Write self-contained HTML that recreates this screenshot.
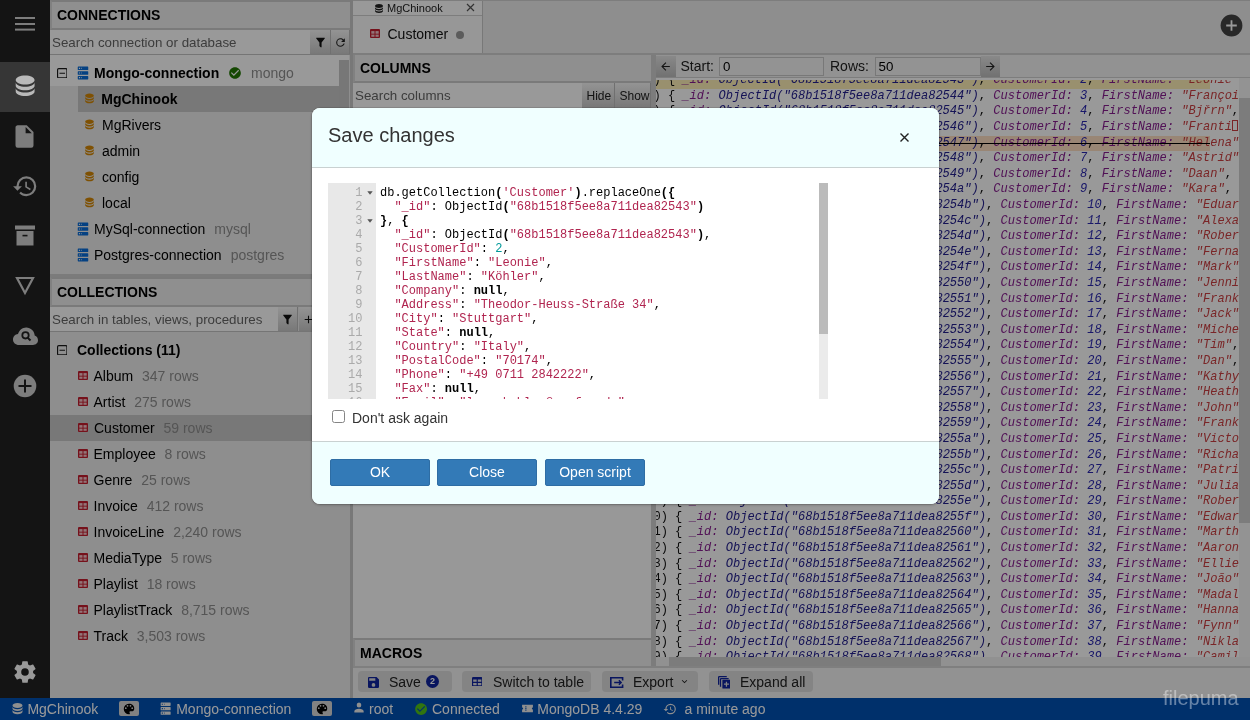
<!DOCTYPE html>
<html><head><meta charset="utf-8">
<style>
*{box-sizing:border-box;margin:0;padding:0}
html,body{width:1250px;height:720px;overflow:hidden;background:#ededed;font-family:"Liberation Sans",sans-serif;font-size:14px;color:#000}
.abs{position:absolute}
#root{position:absolute;left:0;top:0;width:1250px;height:720px;overflow:hidden;will-change:transform}
svg{display:block}
/* icon bar */
#iconbar{position:absolute;left:0;top:0;width:50px;height:698px;background:#222}
#iconbar .it{position:absolute;left:0;width:50px;height:50px}
#iconbar .sel{background:#5a5a5a}
#iconbar svg{position:absolute}
/* sidebar */
#sidebar{position:absolute;left:50px;top:0;width:300px;height:698px;background:#ededed}
.wtitle{position:absolute;left:0;width:300px;height:30px;background:#eeeeee;border-top:2px solid #cccccc;border-left:2px solid #d8d8d8;border-bottom:2px solid #cccccc;font-weight:bold;font-size:14px;padding:5px 0 0 5px;letter-spacing:0}
.srow{position:absolute;left:0;width:300px;height:25px;border-bottom:1px solid #c4c4c4}
.sinput{position:absolute;left:0;top:0;height:24px;background:#fff;color:#666;font-size:13.333px;padding:5px 0 0 2px}
.sbtn{position:absolute;top:0;height:24px;background:linear-gradient(#f6f6f6,#c8c8c8);border-right:1px solid #bbb}
.sbtn svg{position:absolute;left:4px;top:5px}
.row{position:absolute;height:26px;white-space:nowrap}
.row .ic{position:absolute}
.row .tx{position:absolute;top:5px;line-height:16px}
.gray{color:#8e8e8e}
/* main */
#tabbar{position:absolute;left:353px;top:0;width:897px;height:55px;background:#ededed;border-top:1px solid #d0d0d0;border-bottom:2px solid #d0d0d0}
.tabgrp{position:absolute;left:0;top:0;width:130px;height:52px;border-right:1px solid #c8c8c8}
.tabhdr{position:absolute;left:0;top:0;width:129px;height:15px;background:#fff;border-bottom:1px solid #d0d0d0;font-size:11px}
.tab{position:absolute;left:0;top:15px;width:129px;height:37px;background:#fcfcfc}
#splitL{position:absolute;left:350px;top:0;width:3px;height:698px;background:#c9c9c9}
#colpanel{position:absolute;left:353px;top:55px;width:298px;height:613px;background:#fdfdfd}
#splitM{position:absolute;left:651px;top:55px;width:5px;height:613px;background:#cfcfcf}
#data{position:absolute;left:656px;top:55px;width:594px;height:613px;background:#fff}
#dtool{position:absolute;left:0;top:0;width:594px;height:23px;background:#f4f4f4;border-bottom:1px solid #d0d0d0}
.dbtn{position:absolute;top:1px;height:21px;width:20px;background:linear-gradient(#e4e4e4,#bdbdbd)}
.dinp{position:absolute;top:2px;height:19px;background:#f6f6f6;border:1px solid #c8c8c8;font-size:13.333px;padding:1px 0 0 3px}
#jview{position:absolute;left:0;top:24.5px;width:583px;height:577.5px;overflow:hidden}
#jinner{position:absolute;left:-28.8px;top:-6.25px;width:583px}
.jr{height:15.6px;line-height:15.6px;white-space:nowrap;font-family:"Liberation Mono",monospace;font-size:12.05px;color:#111;position:relative}
.jr b,.jr i,.jr u,.jr s{font-style:italic}
.jt{position:relative;left:19px}
.jr b{font-weight:normal;color:#871d8f}
.jr i{color:#24208f}
.jr u{text-decoration:none;color:#2a27b0}
.jr s{text-decoration:none;color:#cb3f41}
.jr.mod{background:#fff1b8}
.jr.del{background:#ffe0c4}
.jr.del::after{content:"";position:absolute;left:0;right:0;top:7.3px;height:1.3px;background:#000}
.tofu{display:inline-block;width:6px;height:11px;border:1px solid #cb3f41;vertical-align:-1px;margin:0 1px 0 0}
#vscroll{position:absolute;left:583px;top:23px;width:11px;height:579px;background:#f6f6f6}
#vthumb{position:absolute;left:0;top:20px;width:11px;height:425px;background:#cfcfcf}
#hscroll{position:absolute;left:0;top:602px;width:594px;height:11px;background:#f2f2f2}
#hthumb{position:absolute;left:13px;top:0;width:272px;height:11px;background:#cfcfcf}
#btool{position:absolute;left:353px;top:666px;width:897px;height:32px;background:#f3f3f3;border-top:2px solid #d4d4d4}
.tbtn{position:absolute;top:3px;height:21px;background:#dcdcdc;border-radius:4px;white-space:nowrap}
.tbtn svg{position:absolute}
.tbtn .tx{position:absolute;top:3px;line-height:16px;color:#222}
#status{position:absolute;left:0;top:698px;width:1250px;height:22px;background:#0050b3;color:#fff;white-space:nowrap}
#status .tx{position:absolute;top:3px;line-height:16px}
#status svg{position:absolute}
.pal{position:absolute;top:3px;width:20px;height:15px;background:#d9d9d9;border-radius:2px}
#overlay{position:absolute;left:0;top:0;width:1250px;height:720px;background:rgba(0,0,0,0.4)}
/* modal */
#modal{position:absolute;left:312px;top:108px;width:627px;height:396px;background:#fff;border-radius:8px;overflow:hidden;box-shadow:0 0 0 1px rgba(0,0,0,0.10),0 1px 3px rgba(0,0,0,0.25)}
#mhdr{position:absolute;left:0;top:0;width:627px;height:60px;background:rgb(240,255,255);border-bottom:1px solid #c9d1d1}
#mtitle{position:absolute;left:16px;top:16px;font-size:20px;color:#333;line-height:23px}
#mclose{position:absolute;left:586px;top:22px}
#editor{position:absolute;left:16px;top:75px;width:500px;height:216px;overflow:hidden;background:#fff;font-family:"Liberation Mono",monospace;font-size:12px}
#gutter{position:absolute;left:0;top:0;width:48px;height:216px;background:#e8e8e8;color:#aaa}
.gl{position:absolute;right:13.5px;height:14px;line-height:14px;margin-top:2.8px}
.fold{position:absolute;left:38.5px;width:6px;height:4px;margin-top:2.6px}
#code{position:absolute;left:52px;top:2.8px;white-space:pre;color:#000}
.cl{height:14px;line-height:14px}
.cs{color:#b0244f}
.cn{color:#099}
.ck{font-weight:bold}
#escroll{position:absolute;left:491px;top:0;width:9px;height:216px;background:#ebebeb}
#ethumb{position:absolute;left:0;top:0;width:9px;height:151px;background:#bbb}
#chk{position:absolute;left:20px;top:302px;width:13px;height:13px;border:1px solid #858585;border-radius:2.5px;background:#fff}
#chktx{position:absolute;left:40px;top:301.8px;line-height:16px;color:#333}
#mfoot{position:absolute;left:0;top:333px;width:627px;height:63px;background:rgb(240,255,255);border-top:1px solid #c9d1d1}
.mbtn{position:absolute;top:17px;width:100px;height:27px;background:#337ab7;border:1px solid #2e6da4;border-radius:2px;color:#fff;text-align:center;line-height:25px;font-size:14px}
#wm{position:absolute;left:1163px;top:686.5px;font-size:20px;line-height:23px;color:rgba(255,255,255,0.4)}
</style></head><body><div id="root">
<svg width="0" height="0" style="position:absolute">
<defs>
<symbol id="i-server" viewBox="0 0 24 24"><path d="M4,1H20A1,1 0 0,1 21,2V6A1,1 0 0,1 20,7H4A1,1 0 0,1 3,6V2A1,1 0 0,1 4,1M4,9H20A1,1 0 0,1 21,10V14A1,1 0 0,1 20,15H4A1,1 0 0,1 3,14V10A1,1 0 0,1 4,9M4,17H20A1,1 0 0,1 21,18V22A1,1 0 0,1 20,23H4A1,1 0 0,1 3,22V18A1,1 0 0,1 4,17M9,5H10V3H9V5M9,13H10V11H9V13M9,21H10V19H9V21M5,3V5H7V3H5M5,11V13H7V11H5M5,19V21H7V19H5Z"/></symbol>
<symbol id="i-db" viewBox="0 0 24 24"><path d="M12,3C7.58,3 4,4.79 4,7C4,9.21 7.58,11 12,11C16.42,11 20,9.21 20,7C20,4.79 16.42,3 12,3M4,9V12C4,14.21 7.58,16 12,16C16.42,16 20,14.21 20,12V9C20,11.21 16.42,13 12,13C7.58,13 4,11.21 4,9M4,14V17C4,19.21 7.58,21 12,21C16.42,21 20,19.21 20,17V14C20,16.21 16.42,18 12,18C7.58,18 4,16.21 4,14Z"/></symbol>
<symbol id="i-table" viewBox="0 0 24 24"><path d="M5,4H19A2,2 0 0,1 21,6V18A2,2 0 0,1 19,20H5A2,2 0 0,1 3,18V6A2,2 0 0,1 5,4M5,8V12H11V8H5M13,8V12H19V8H13M5,14V18H11V14H5M13,14V18H19V14H13Z"/></symbol>
<symbol id="i-minusbox" viewBox="0 0 24 24"><path d="M19,3H5A2,2 0 0,0 3,5V19A2,2 0 0,0 5,21H19A2,2 0 0,0 21,19V5A2,2 0 0,0 19,3M19,19H5V5H19V19M17,11V13H7V11H17Z"/></symbol>
<symbol id="i-check" viewBox="0 0 24 24"><path d="M12 2C6.5 2 2 6.5 2 12S6.5 22 12 22 22 17.5 22 12 17.5 2 12 2M10 17L5 12L6.41 10.59L10 14.17L17.59 6.58L19 8L10 17Z"/></symbol>
<symbol id="i-filter" viewBox="0 0 24 24"><path d="M14,12V19.88C14.04,20.18 13.94,20.5 13.71,20.71C13.32,21.1 12.69,21.1 12.3,20.71L10.29,18.7C10.06,18.47 9.96,18.16 10,17.87V12H9.97L4.21,4.62C3.87,4.19 3.95,3.56 4.38,3.22C4.57,3.08 4.78,3 5,3V3H19V3C19.22,3 19.43,3.08 19.62,3.22C20.05,3.56 20.130,4.19 19.79,4.62L14.03,12H14Z"/></symbol>
<symbol id="i-refresh" viewBox="0 0 24 24"><path d="M17.65,6.35C16.2,4.9 14.21,4 12,4A8,8 0 0,0 4,12A8,8 0 0,0 12,20C15.73,20 18.84,17.45 19.73,14H17.65C16.83,16.33 14.61,18 12,18A6,6 0 0,1 6,12A6,6 0 0,1 12,6C13.66,6 15.14,6.69 16.22,7.78L13,11H20V4L17.65,6.35Z"/></symbol>
<symbol id="i-plus" viewBox="0 0 24 24"><path d="M19,13H13V19H11V13H5V11H11V5H13V11H19V13Z"/></symbol>
<symbol id="i-palette" viewBox="0 0 24 24"><path d="M17.5,12A1.5,1.5 0 0,1 16,10.5A1.5,1.5 0 0,1 17.5,9A1.5,1.5 0 0,1 19,10.5A1.5,1.5 0 0,1 17.5,12M14.5,8A1.5,1.5 0 0,1 13,6.5A1.5,1.5 0 0,1 14.5,5A1.5,1.5 0 0,1 16,6.5A1.5,1.5 0 0,1 14.5,8M9.5,8A1.5,1.5 0 0,1 8,6.5A1.5,1.5 0 0,1 9.5,5A1.5,1.5 0 0,1 11,6.5A1.5,1.5 0 0,1 9.5,8M6.5,12A1.5,1.5 0 0,1 5,10.5A1.5,1.5 0 0,1 6.5,9A1.5,1.5 0 0,1 8,10.5A1.5,1.5 0 0,1 6.5,12M12,3A9,9 0 0,0 3,12A9,9 0 0,0 12,21A1.5,1.5 0 0,0 13.5,19.5C13.5,19.11 13.35,18.76 13.11,18.5C12.88,18.23 12.73,17.88 12.73,17.5A1.5,1.5 0 0,1 14.23,16H16A5,5 0 0,0 21,11C21,6.58 16.97,3 12,3Z"/></symbol>
<symbol id="i-account" viewBox="0 0 24 24"><path d="M12,4A4,4 0 0,1 16,8A4,4 0 0,1 12,12A4,4 0 0,1 8,8A4,4 0 0,1 12,4M12,14C16.42,14 20,15.79 20,18V20H4V18C4,15.79 7.58,14 12,14Z"/></symbol>
<symbol id="i-history" viewBox="0 0 24 24"><path d="M13.5,8H12V13L16.28,15.54L17,14.33L13.5,12.25V8M13,3A9,9 0 0,0 4,12H1L4.96,16.03L9,12H6A7,7 0 0,1 13,5A7,7 0 0,1 20,12A7,7 0 0,1 13,19C11.07,19 9.32,18.21 8.06,16.94L6.64,18.36C8.27,20 10.5,21 13,21A9,9 0 0,0 22,12A9,9 0 0,0 13,3"/></symbol>
<symbol id="i-ticket" viewBox="0 0 24 24"><path d="M2,5H22V10A2,2 0 0,0 22,14V19H2V14A2,2 0 0,0 2,10Z M8,8V10H10V8Z M8,11V13H10V11Z M8,14V16H10V14Z" fill-rule="evenodd"/></symbol>
<symbol id="i-save" viewBox="0 0 24 24"><path d="M15,9H5V5H15M12,19A3,3 0 0,1 9,16A3,3 0 0,1 12,13A3,3 0 0,1 15,16A3,3 0 0,1 12,19M17,3H5C3.89,3 3,3.9 3,5V19A2,2 0 0,0 5,21H19A2,2 0 0,0 21,19V7L17,3Z"/></symbol>
<symbol id="i-export" viewBox="0 0 24 24"><path d="M23,12L19,8V11H10V13H19V16M1,18V6C1,4.89 1.9,4 3,4H15A2,2 0 0,1 17,6V9H15V6H3V18H15V15H17V18A2,2 0 0,1 15,20H3A2,2 0 0,1 1,18Z"/></symbol>
<symbol id="i-chev" viewBox="0 0 24 24"><path d="M7.41,8.58L12,13.17L16.59,8.58L18,10L12,16L6,10L7.41,8.58Z"/></symbol>
<symbol id="i-left" viewBox="0 0 24 24"><path d="M20,11V13H8L13.5,18.5L12.08,19.92L4.16,12L12.08,4.08L13.5,5.5L8,11H20Z"/></symbol>
<symbol id="i-right" viewBox="0 0 24 24"><path d="M4,11V13H16L10.5,18.5L11.92,19.92L19.84,12L11.92,4.08L10.5,5.5L16,11H4Z"/></symbol>
<symbol id="i-close" viewBox="0 0 24 24"><path d="M19,6.41L17.59,5L12,10.59L6.41,5L5,6.41L10.59,12L5,17.59L6.41,19L12,13.41L17.59,19L19,17.59L13.41,12L19,6.41Z"/></symbol>
<symbol id="i-expand" viewBox="0 0 24 24"><path d="M4,2H16V4H4V16H2V4A2,2 0 0,1 4,2Z M7,5H19V7H7V19H5V7A2,2 0 0,1 7,5Z" /><path d="M10,8H21A1,1 0 0,1 22,9V21A1,1 0 0,1 21,22H10A1,1 0 0,1 9,21V9A1,1 0 0,1 10,8Z M14.5,11V14H11.5V16H14.5V19H16.5V16H19.5V14H16.5V11Z" fill-rule="evenodd"/></symbol>
<symbol id="i-tbl2" viewBox="0 0 10 9"><rect x="0" y="0" width="10" height="9" rx="1" fill="#c41d2e"/><rect x="1.3" y="2.1" width="3.2" height="2.6" fill="#f4c4c9"/><rect x="5.5" y="2.1" width="3.2" height="2.6" fill="#f4c4c9"/><rect x="1.3" y="5.6" width="3.2" height="2.2" fill="#f4c4c9"/><rect x="5.5" y="5.6" width="3.2" height="2.2" fill="#f4c4c9"/></symbol>
<symbol id="i-minus2" viewBox="0 0 11 11"><rect x="0.6" y="0.6" width="9.8" height="9.8" rx="1.2" fill="none" stroke="#1a1a1a" stroke-width="1.2"/><path d="M2.6,5.5H8.4" stroke="#1a1a1a" stroke-width="1.3"/></symbol>
<symbol id="i-export2" viewBox="0 0 14 11"><path d="M12.6,3.4V0.8H0.8V10.2H12.6V7.6" fill="none" stroke="#10239e" stroke-width="1.6"/><path d="M4.2,5.5H11.2M8.9,3.2L11.2,5.5L8.9,7.8" fill="none" stroke="#10239e" stroke-width="1.4"/></symbol>
</defs></svg>
<div id="iconbar">
  <svg class="abs" style="left:15px;top:17px" width="20" height="14"><rect x="0" y="0" width="20" height="2" fill="#d0d0d0"/><rect x="0" y="6" width="20" height="2" fill="#d0d0d0"/><rect x="0" y="11.6" width="20" height="2" fill="#d0d0d0"/></svg>
  <div class="it sel" style="top:62px"></div>
  
  <svg style="left:11px;top:123px" width="27" height="27" viewBox="0 0 24 24"><path fill="#d0d0d0" d="M13,9V3.5L18.5,9M6,2C4.89,2 4,2.89 4,4V20A2,2 0 0,0 6,22H18A2,2 0 0,0 20,20V8L14,2H6Z"/></svg>
  <svg style="left:12px;top:172.5px" width="26.5" height="26.5" viewBox="0 0 24 24"><path fill="#d0d0d0" d="M13.5,8H12V13L16.28,15.54L17,14.33L13.5,12.25V8M13,3A9,9 0 0,0 4,12H1L4.96,16.03L9,12H6A7,7 0 0,1 13,5A7,7 0 0,1 20,12A7,7 0 0,1 13,19C11.07,19 9.32,18.21 8.06,16.94L6.64,18.36C8.27,20 10.5,21 13,21A9,9 0 0,0 22,12A9,9 0 0,0 13,3"/></svg>
  <svg style="left:13px;top:224px" width="24" height="24" viewBox="0 0 24 24"><path fill="#d0d0d0" d="M2,1.5H22V5.5H2Z M3.5,7H20.5V21.5H3.5Z"/><rect x="9.5" y="10.8" width="5" height="1.6" fill="#222"/></svg>
  <svg style="left:13px;top:275px" width="24" height="22" viewBox="0 0 24 22"><path fill="none" stroke="#d0d0d0" stroke-width="2.2" d="M4,3H20L12,18Z"/></svg>
  <svg style="left:12px;top:324px" width="27" height="24" viewBox="0 0 27 24"><path fill="#d0d0d0" d="M7,21C3.5,21 1,18.6 1,15.5C1,12.7 3.2,10.4 6,10.1C7.2,6.3 10.4,3.5 14.2,3.5C18.9,3.5 22.5,7.2 22.7,11.6C24.8,12.3 26,14.1 26,16.3C26,19 23.8,21 21,21Z"/><circle cx="13.5" cy="11.3" r="3.2" fill="none" stroke="#222" stroke-width="1.8"/><path d="M15.6,13.6L18.5,16.5" stroke="#222" stroke-width="2"/></svg>
  <svg style="left:12px;top:373px" width="26" height="26" viewBox="0 0 26 26"><circle cx="13" cy="13" r="11.3" fill="#d0d0d0"/><path d="M6.5,12H19.5V14H6.5Z M12,6.5H14V19.5H12Z" fill="#222"/></svg>
  <svg style="left:12px;top:659px" width="26" height="26" viewBox="0 0 24 24"><path fill="#fff" d="M12,15.5A3.5,3.5 0 0,1 8.5,12A3.5,3.5 0 0,1 12,8.5A3.5,3.5 0 0,1 15.5,12A3.5,3.5 0 0,1 12,15.5M19.43,12.97C19.47,12.65 19.5,12.33 19.5,12C19.5,11.67 19.47,11.34 19.43,11L21.54,9.37C21.73,9.22 21.78,8.95 21.66,8.73L19.66,5.27C19.54,5.05 19.27,4.96 19.05,5.05L16.56,6.05C16.04,5.66 15.5,5.32 14.87,5.07L14.5,2.42C14.46,2.18 14.25,2 14,2H10C9.75,2 9.54,2.18 9.5,2.42L9.13,5.07C8.5,5.32 7.96,5.66 7.44,6.05L4.95,5.05C4.73,4.96 4.46,5.05 4.34,5.27L2.34,8.73C2.21,8.95 2.27,9.22 2.46,9.37L4.57,11C4.53,11.34 4.5,11.67 4.5,12C4.5,12.33 4.53,12.65 4.57,12.97L2.46,14.63C2.27,14.78 2.21,15.05 2.34,15.27L4.34,18.73C4.46,18.95 4.73,19.03 4.95,18.95L7.44,17.94C7.96,18.34 8.5,18.68 9.13,18.93L9.5,21.58C9.54,21.820 9.75,22 10,22H14C14.25,22 14.46,21.82 14.5,21.58L14.87,18.93C15.5,18.67 16.04,18.34 16.56,17.94L19.05,18.95C19.27,19.03 19.54,18.95 19.66,18.73L21.66,15.27C21.78,15.05 21.73,14.78 21.54,14.63L19.43,12.97Z"/></svg>
</div>
<div id="sidebar">
  <div class="wtitle" style="top:0">CONNECTIONS</div>
  <div class="srow" style="top:30px">
    <div class="sinput" style="width:260px">Search connection or database</div>
    <div class="sbtn" style="left:260px;width:21px"><svg width="13" height="13" style="left:4px;top:6px"><use href="#i-filter" fill="#111"/></svg></div>
    <div class="sbtn" style="left:281px;width:19px"><svg width="13" height="13" style="left:3px;top:6px"><use href="#i-refresh" fill="#222"/></svg></div>
  </div>
  <div class="abs" style="left:0;top:55px;width:299px;height:5px;background:#fff"></div>
  <div class="abs" style="left:289px;top:60px;width:10px;height:214px;background:#c6c6c6"></div>
  <div class="row" style="left:0;top:60px;width:289px;background:#fff">
    <svg class="ic" style="left:6.5px;top:7.8px" width="10.5" height="10.5"><use href="#i-minus2"/></svg>
    <svg class="ic" style="left:26px;top:6px" width="14" height="14"><use href="#i-server" fill="#096dd9"/></svg>
    <span class="tx" style="left:44px;font-weight:bold">Mongo-connection</span>
    <svg class="ic" style="left:178px;top:6px" width="14" height="14"><use href="#i-check" fill="#237804"/></svg>
    <span class="tx gray" style="left:201px">mongo</span>
  </div>
  <div class="row" style="left:28px;top:86px;width:261px;background:#c8c8c8">
    <svg class="ic" style="left:5px;top:6px" width="13" height="14" viewBox="0 0 24 26" preserveAspectRatio="none"><use href="#i-db" width="24" height="24" fill="#d48806"/></svg>
    <span class="tx" style="left:23.3px;font-weight:bold">MgChinook</span>
  </div>
  <div class="row" style="left:28px;top:112px;width:261px"><svg class="ic" style="left:5px;top:6px" width="13" height="14" viewBox="0 0 24 26" preserveAspectRatio="none"><use href="#i-db" width="24" height="24" fill="#d48806"/></svg><span class="tx" style="left:24px">MgRivers</span></div>
  <div class="row" style="left:28px;top:138px;width:261px"><svg class="ic" style="left:5px;top:6px" width="13" height="14" viewBox="0 0 24 26" preserveAspectRatio="none"><use href="#i-db" width="24" height="24" fill="#d48806"/></svg><span class="tx" style="left:24px">admin</span></div>
  <div class="row" style="left:28px;top:164px;width:261px"><svg class="ic" style="left:5px;top:6px" width="13" height="14" viewBox="0 0 24 26" preserveAspectRatio="none"><use href="#i-db" width="24" height="24" fill="#d48806"/></svg><span class="tx" style="left:24px">config</span></div>
  <div class="row" style="left:28px;top:190px;width:261px"><svg class="ic" style="left:5px;top:6px" width="13" height="14" viewBox="0 0 24 26" preserveAspectRatio="none"><use href="#i-db" width="24" height="24" fill="#d48806"/></svg><span class="tx" style="left:24px">local</span></div>
  <div class="row" style="left:0;top:216px;width:289px">
    <svg class="ic" style="left:26px;top:6px" width="14" height="14"><use href="#i-server" fill="#096dd9"/></svg>
    <span class="tx" style="left:44px">MySql-connection<span class="gray" style="margin-left:9px">mysql</span></span>
  </div>
  <div class="row" style="left:0;top:242px;width:289px">
    <svg class="ic" style="left:26px;top:6px" width="14" height="14"><use href="#i-server" fill="#096dd9"/></svg>
    <span class="tx" style="left:44px">Postgres-connection<span class="gray" style="margin-left:9px">postgres</span></span>
  </div>
  <div class="abs" style="left:0;top:274px;width:300px;height:5px;background:#cdcdcd"></div>
  <div class="wtitle" style="top:277px">COLLECTIONS</div>
  <div class="srow" style="top:307px">
    <div class="sinput" style="width:228px">Search in tables, views, procedures</div>
    <div class="sbtn" style="left:228px;width:20px"><svg width="13" height="13" style="left:3px;top:6px"><use href="#i-filter" fill="#111"/></svg></div>
    <div class="sbtn" style="left:249px;width:20px"><svg width="13" height="13" style="left:3px;top:6px"><use href="#i-plus" fill="#111"/></svg></div>
  </div>
  <div class="row" style="left:0;top:337px;width:300px">
    <svg class="ic" style="left:6.5px;top:7.8px" width="10.5" height="10.5"><use href="#i-minus2"/></svg>
    <span class="tx" style="left:27px;font-weight:bold">Collections (11)</span>
  </div>
  <div class="row" style="left:0;top:363px;width:300px"><svg class="ic" style="left:28px;top:8px" width="10" height="9"><use href="#i-tbl2"/></svg><span class="tx" style="left:43.5px">Album<span class="gray" style="margin-left:8.8px">347 rows</span></span></div>
  <div class="row" style="left:0;top:389px;width:300px"><svg class="ic" style="left:28px;top:8px" width="10" height="9"><use href="#i-tbl2"/></svg><span class="tx" style="left:43.5px">Artist<span class="gray" style="margin-left:8.8px">275 rows</span></span></div>
  <div class="row" style="left:0;top:415px;width:300px;background:#c8c8c8"><svg class="ic" style="left:28px;top:8px" width="10" height="9"><use href="#i-tbl2"/></svg><span class="tx" style="left:44px">Customer<span class="gray" style="margin-left:8.8px">59 rows</span></span></div>
  <div class="row" style="left:0;top:441px;width:300px"><svg class="ic" style="left:28px;top:8px" width="10" height="9"><use href="#i-tbl2"/></svg><span class="tx" style="left:43.5px">Employee<span class="gray" style="margin-left:8.8px">8 rows</span></span></div>
  <div class="row" style="left:0;top:467px;width:300px"><svg class="ic" style="left:28px;top:8px" width="10" height="9"><use href="#i-tbl2"/></svg><span class="tx" style="left:43.5px">Genre<span class="gray" style="margin-left:8.8px">25 rows</span></span></div>
  <div class="row" style="left:0;top:493px;width:300px"><svg class="ic" style="left:28px;top:8px" width="10" height="9"><use href="#i-tbl2"/></svg><span class="tx" style="left:43.5px">Invoice<span class="gray" style="margin-left:8.8px">412 rows</span></span></div>
  <div class="row" style="left:0;top:519px;width:300px"><svg class="ic" style="left:28px;top:8px" width="10" height="9"><use href="#i-tbl2"/></svg><span class="tx" style="left:43.5px">InvoiceLine<span class="gray" style="margin-left:8.8px">2,240 rows</span></span></div>
  <div class="row" style="left:0;top:545px;width:300px"><svg class="ic" style="left:28px;top:8px" width="10" height="9"><use href="#i-tbl2"/></svg><span class="tx" style="left:43.5px">MediaType<span class="gray" style="margin-left:8.8px">5 rows</span></span></div>
  <div class="row" style="left:0;top:571px;width:300px"><svg class="ic" style="left:28px;top:8px" width="10" height="9"><use href="#i-tbl2"/></svg><span class="tx" style="left:43.5px">Playlist<span class="gray" style="margin-left:8.8px">18 rows</span></span></div>
  <div class="row" style="left:0;top:597px;width:300px"><svg class="ic" style="left:28px;top:8px" width="10" height="9"><use href="#i-tbl2"/></svg><span class="tx" style="left:43.5px">PlaylistTrack<span class="gray" style="margin-left:8.8px">8,715 rows</span></span></div>
  <div class="row" style="left:0;top:623px;width:300px"><svg class="ic" style="left:28px;top:8px" width="10" height="9"><use href="#i-tbl2"/></svg><span class="tx" style="left:43.5px">Track<span class="gray" style="margin-left:8.8px">3,503 rows</span></span></div>
</div>
<div id="splitL"></div>
<div id="tabbar">
  <div class="tabgrp">
    <div class="tabhdr">
      <svg class="abs" style="left:21.5px;top:2.5px" width="8" height="9" viewBox="4 3 16 18" preserveAspectRatio="none"><use href="#i-db" width="24" height="24" fill="#222"/></svg>
      <span class="abs" style="left:34px;top:1px;line-height:13px;color:#222">MgChinook</span>
      <svg class="abs" style="left:113px;top:2px" width="9" height="9" viewBox="0 0 9 9"><path d="M1,1L8,8M8,1L1,8" stroke="#555" stroke-width="1.2"/></svg>
    </div>
    <div class="tab">
      <svg class="abs" style="left:17px;top:13px" width="10" height="9"><use href="#i-tbl2"/></svg>
      <span class="abs" style="left:34.5px;top:10px;line-height:16px;color:#111">Customer</span>
      <div class="abs" style="left:103px;top:14.6px;width:8px;height:8px;border-radius:50%;background:#999"></div>
    </div>
  </div>
  <svg class="abs" style="left:867.2px;top:13px" width="23" height="23" viewBox="0 0 23 23"><circle cx="11.5" cy="11.5" r="10.9" fill="#444"/><path d="M6.2,10.6H16.8V12.4H6.2Z M10.6,6.2H12.4V16.8H10.6Z" fill="#fff"/></svg>
</div>
<div id="colpanel">
  <div class="abs" style="left:0;top:0;width:298px;height:28px;background:#eeeeee;border-left:2px solid #d8d8d8;border-bottom:2px solid #cccccc;font-weight:bold;padding:5px 0 0 5px">COLUMNS</div>
  <div class="abs" style="left:0;top:28px;width:298px;height:25px">
    <div class="sinput" style="width:229px;height:25px;padding-top:5px;background:#fff">Search columns</div>
    <div class="sbtn" style="left:229px;width:33px;height:25px"><span class="abs" style="left:4.5px;top:5px;line-height:16px;font-size:12px;color:#222">Hide</span></div>
    <div class="sbtn" style="left:262px;width:36px;height:25px"><span class="abs" style="left:4.5px;top:5px;line-height:16px;font-size:12px;color:#222">Show</span></div>
  </div>
  <div class="abs" style="left:0;top:583px;width:298px;height:30px;background:#eeeeee;border-top:2px solid #cccccc;border-left:2px solid #d8d8d8;border-bottom:2px solid #cccccc;font-weight:bold;padding:5px 0 0 5px">MACROS</div>
</div>
<div id="splitM"></div>
<div id="data">
  <div id="dtool">
    <div class="dbtn" style="left:0"><svg class="abs" style="left:3px;top:4px" width="13" height="13"><use href="#i-left" fill="#222"/></svg></div>
    <span class="abs" style="left:24.5px;top:3px;line-height:16px;color:#222">Start:</span>
    <div class="dinp" style="left:63px;width:105px">0</div>
    <span class="abs" style="left:174px;top:3px;line-height:16px;color:#222">Rows:</span>
    <div class="dinp" style="left:218.5px;width:106px">50</div>
    <div class="dbtn" style="left:325px;width:19px"><svg class="abs" style="left:3px;top:4px" width="13" height="13"><use href="#i-right" fill="#222"/></svg></div>
  </div>
  <div id="jview"><div id="jinner">
<div class="jr mod"><span class="jt">2) { <b>_id:</b> <i>ObjectId("68b1518f5ee8a711dea82543")</i>, <b>CustomerId:</b> <u>2</u>, <b>FirstName:</b> <s>"Leonie"</s>, <b>LastName:</b> </span></div>
<div class="jr"><span class="jt">3) { <b>_id:</b> <i>ObjectId("68b1518f5ee8a711dea82544")</i>, <b>CustomerId:</b> <u>3</u>, <b>FirstName:</b> <s>"François"</s>, <b>LastName:</b> </span></div>
<div class="jr"><span class="jt">4) { <b>_id:</b> <i>ObjectId("68b1518f5ee8a711dea82545")</i>, <b>CustomerId:</b> <u>4</u>, <b>FirstName:</b> <s>"Bjřrn"</s>, <b>LastName:</b> </span></div>
<div class="jr"><span class="jt">5) { <b>_id:</b> <i>ObjectId("68b1518f5ee8a711dea82546")</i>, <b>CustomerId:</b> <u>5</u>, <b>FirstName:</b> <s>"Franti<span class="tofu"></span>ek"</s>, <b>LastName:</b> </span></div>
<div class="jr del"><span class="jt">6) { <b>_id:</b> <i>ObjectId("68b1518f5ee8a711dea82547")</i>, <b>CustomerId:</b> <u>6</u>, <b>FirstName:</b> <s>"Helena"</s>, <b>LastName:</b> </span></div>
<div class="jr"><span class="jt">7) { <b>_id:</b> <i>ObjectId("68b1518f5ee8a711dea82548")</i>, <b>CustomerId:</b> <u>7</u>, <b>FirstName:</b> <s>"Astrid"</s>, <b>LastName:</b> </span></div>
<div class="jr"><span class="jt">8) { <b>_id:</b> <i>ObjectId("68b1518f5ee8a711dea82549")</i>, <b>CustomerId:</b> <u>8</u>, <b>FirstName:</b> <s>"Daan"</s>, <b>LastName:</b> </span></div>
<div class="jr"><span class="jt">9) { <b>_id:</b> <i>ObjectId("68b1518f5ee8a711dea8254a")</i>, <b>CustomerId:</b> <u>9</u>, <b>FirstName:</b> <s>"Kara"</s>, <b>LastName:</b> </span></div>
<div class="jr"><span class="jt">10) { <b>_id:</b> <i>ObjectId("68b1518f5ee8a711dea8254b")</i>, <b>CustomerId:</b> <u>10</u>, <b>FirstName:</b> <s>"Eduardo"</s>, <b>LastName:</b> </span></div>
<div class="jr"><span class="jt">11) { <b>_id:</b> <i>ObjectId("68b1518f5ee8a711dea8254c")</i>, <b>CustomerId:</b> <u>11</u>, <b>FirstName:</b> <s>"Alexandre"</s>, <b>LastName:</b> </span></div>
<div class="jr"><span class="jt">12) { <b>_id:</b> <i>ObjectId("68b1518f5ee8a711dea8254d")</i>, <b>CustomerId:</b> <u>12</u>, <b>FirstName:</b> <s>"Roberto"</s>, <b>LastName:</b> </span></div>
<div class="jr"><span class="jt">13) { <b>_id:</b> <i>ObjectId("68b1518f5ee8a711dea8254e")</i>, <b>CustomerId:</b> <u>13</u>, <b>FirstName:</b> <s>"Fernanda"</s>, <b>LastName:</b> </span></div>
<div class="jr"><span class="jt">14) { <b>_id:</b> <i>ObjectId("68b1518f5ee8a711dea8254f")</i>, <b>CustomerId:</b> <u>14</u>, <b>FirstName:</b> <s>"Mark"</s>, <b>LastName:</b> </span></div>
<div class="jr"><span class="jt">15) { <b>_id:</b> <i>ObjectId("68b1518f5ee8a711dea82550")</i>, <b>CustomerId:</b> <u>15</u>, <b>FirstName:</b> <s>"Jennifer"</s>, <b>LastName:</b> </span></div>
<div class="jr"><span class="jt">16) { <b>_id:</b> <i>ObjectId("68b1518f5ee8a711dea82551")</i>, <b>CustomerId:</b> <u>16</u>, <b>FirstName:</b> <s>"Frank"</s>, <b>LastName:</b> </span></div>
<div class="jr"><span class="jt">17) { <b>_id:</b> <i>ObjectId("68b1518f5ee8a711dea82552")</i>, <b>CustomerId:</b> <u>17</u>, <b>FirstName:</b> <s>"Jack"</s>, <b>LastName:</b> </span></div>
<div class="jr"><span class="jt">18) { <b>_id:</b> <i>ObjectId("68b1518f5ee8a711dea82553")</i>, <b>CustomerId:</b> <u>18</u>, <b>FirstName:</b> <s>"Michelle"</s>, <b>LastName:</b> </span></div>
<div class="jr"><span class="jt">19) { <b>_id:</b> <i>ObjectId("68b1518f5ee8a711dea82554")</i>, <b>CustomerId:</b> <u>19</u>, <b>FirstName:</b> <s>"Tim"</s>, <b>LastName:</b> </span></div>
<div class="jr"><span class="jt">20) { <b>_id:</b> <i>ObjectId("68b1518f5ee8a711dea82555")</i>, <b>CustomerId:</b> <u>20</u>, <b>FirstName:</b> <s>"Dan"</s>, <b>LastName:</b> </span></div>
<div class="jr"><span class="jt">21) { <b>_id:</b> <i>ObjectId("68b1518f5ee8a711dea82556")</i>, <b>CustomerId:</b> <u>21</u>, <b>FirstName:</b> <s>"Kathy"</s>, <b>LastName:</b> </span></div>
<div class="jr"><span class="jt">22) { <b>_id:</b> <i>ObjectId("68b1518f5ee8a711dea82557")</i>, <b>CustomerId:</b> <u>22</u>, <b>FirstName:</b> <s>"Heather"</s>, <b>LastName:</b> </span></div>
<div class="jr"><span class="jt">23) { <b>_id:</b> <i>ObjectId("68b1518f5ee8a711dea82558")</i>, <b>CustomerId:</b> <u>23</u>, <b>FirstName:</b> <s>"John"</s>, <b>LastName:</b> </span></div>
<div class="jr"><span class="jt">24) { <b>_id:</b> <i>ObjectId("68b1518f5ee8a711dea82559")</i>, <b>CustomerId:</b> <u>24</u>, <b>FirstName:</b> <s>"Frank"</s>, <b>LastName:</b> </span></div>
<div class="jr"><span class="jt">25) { <b>_id:</b> <i>ObjectId("68b1518f5ee8a711dea8255a")</i>, <b>CustomerId:</b> <u>25</u>, <b>FirstName:</b> <s>"Victor"</s>, <b>LastName:</b> </span></div>
<div class="jr"><span class="jt">26) { <b>_id:</b> <i>ObjectId("68b1518f5ee8a711dea8255b")</i>, <b>CustomerId:</b> <u>26</u>, <b>FirstName:</b> <s>"Richard"</s>, <b>LastName:</b> </span></div>
<div class="jr"><span class="jt">27) { <b>_id:</b> <i>ObjectId("68b1518f5ee8a711dea8255c")</i>, <b>CustomerId:</b> <u>27</u>, <b>FirstName:</b> <s>"Patrick"</s>, <b>LastName:</b> </span></div>
<div class="jr"><span class="jt">28) { <b>_id:</b> <i>ObjectId("68b1518f5ee8a711dea8255d")</i>, <b>CustomerId:</b> <u>28</u>, <b>FirstName:</b> <s>"Julia"</s>, <b>LastName:</b> </span></div>
<div class="jr"><span class="jt">29) { <b>_id:</b> <i>ObjectId("68b1518f5ee8a711dea8255e")</i>, <b>CustomerId:</b> <u>29</u>, <b>FirstName:</b> <s>"Robert"</s>, <b>LastName:</b> </span></div>
<div class="jr"><span class="jt">30) { <b>_id:</b> <i>ObjectId("68b1518f5ee8a711dea8255f")</i>, <b>CustomerId:</b> <u>30</u>, <b>FirstName:</b> <s>"Edward"</s>, <b>LastName:</b> </span></div>
<div class="jr"><span class="jt">31) { <b>_id:</b> <i>ObjectId("68b1518f5ee8a711dea82560")</i>, <b>CustomerId:</b> <u>31</u>, <b>FirstName:</b> <s>"Martha"</s>, <b>LastName:</b> </span></div>
<div class="jr"><span class="jt">32) { <b>_id:</b> <i>ObjectId("68b1518f5ee8a711dea82561")</i>, <b>CustomerId:</b> <u>32</u>, <b>FirstName:</b> <s>"Aaron"</s>, <b>LastName:</b> </span></div>
<div class="jr"><span class="jt">33) { <b>_id:</b> <i>ObjectId("68b1518f5ee8a711dea82562")</i>, <b>CustomerId:</b> <u>33</u>, <b>FirstName:</b> <s>"Ellie"</s>, <b>LastName:</b> </span></div>
<div class="jr"><span class="jt">34) { <b>_id:</b> <i>ObjectId("68b1518f5ee8a711dea82563")</i>, <b>CustomerId:</b> <u>34</u>, <b>FirstName:</b> <s>"João"</s>, <b>LastName:</b> </span></div>
<div class="jr"><span class="jt">35) { <b>_id:</b> <i>ObjectId("68b1518f5ee8a711dea82564")</i>, <b>CustomerId:</b> <u>35</u>, <b>FirstName:</b> <s>"Madalena"</s>, <b>LastName:</b> </span></div>
<div class="jr"><span class="jt">36) { <b>_id:</b> <i>ObjectId("68b1518f5ee8a711dea82565")</i>, <b>CustomerId:</b> <u>36</u>, <b>FirstName:</b> <s>"Hannah"</s>, <b>LastName:</b> </span></div>
<div class="jr"><span class="jt">37) { <b>_id:</b> <i>ObjectId("68b1518f5ee8a711dea82566")</i>, <b>CustomerId:</b> <u>37</u>, <b>FirstName:</b> <s>"Fynn"</s>, <b>LastName:</b> </span></div>
<div class="jr"><span class="jt">38) { <b>_id:</b> <i>ObjectId("68b1518f5ee8a711dea82567")</i>, <b>CustomerId:</b> <u>38</u>, <b>FirstName:</b> <s>"Niklas"</s>, <b>LastName:</b> </span></div>
<div class="jr"><span class="jt">39) { <b>_id:</b> <i>ObjectId("68b1518f5ee8a711dea82568")</i>, <b>CustomerId:</b> <u>39</u>, <b>FirstName:</b> <s>"Camille"</s>, <b>LastName:</b> </span></div>  </div></div>
  <div id="vscroll"><div id="vthumb"></div></div>
  <div id="hscroll"><div id="hthumb"></div></div>
</div>
<div id="btool">
  <div class="tbtn" style="left:5px;width:94px"><svg style="left:9.5px;top:5.5px" width="11" height="11" viewBox="3 3 18 18"><use href="#i-save" width="24" height="24" fill="#10239e"/></svg><span class="tx" style="left:31px">Save</span><div class="abs" style="left:68px;top:4px;width:13px;height:13px;border-radius:50%;background:#10239e;color:#fff;font-size:9px;line-height:13px;text-align:center;font-weight:bold">2</div></div>
  <div class="tbtn" style="left:109px;width:129px"><svg style="left:9.5px;top:5.5px" width="10.5" height="9.5" viewBox="3 4 18 16" preserveAspectRatio="none"><use href="#i-table" width="24" height="24" fill="#10239e"/></svg><span class="tx" style="left:31px">Switch to table</span></div>
  <div class="tbtn" style="left:249px;width:96px"><svg style="left:8px;top:5.5px" width="14" height="11"><use href="#i-export2"/></svg><span class="tx" style="left:31px">Export</span><svg style="left:77px;top:5px" width="11" height="11"><use href="#i-chev" fill="#222"/></svg></div>
  <div class="tbtn" style="left:356px;width:104px"><svg style="left:8.5px;top:5px" width="12.5" height="12.5" viewBox="2 2 20 20"><use href="#i-expand" width="24" height="24" fill="#10239e"/></svg><span class="tx" style="left:31px">Expand all</span></div>
</div>
<div id="status">
  <svg style="left:9.5px;top:3px" width="15" height="15"><use href="#i-db" fill="#eee"/></svg>
  <span class="tx" style="left:27.4px">MgChinook</span>
  <div class="pal" style="left:119px"><svg style="left:3px;top:0.5px" width="14" height="14"><use href="#i-palette" fill="#000"/></svg></div>
  <svg style="left:159.3px;top:4px" width="13.3" height="13.3"><use href="#i-server" fill="#eee"/></svg>
  <span class="tx" style="left:176.2px">Mongo-connection</span>
  <div class="pal" style="left:312px"><svg style="left:3px;top:0.5px" width="14" height="14"><use href="#i-palette" fill="#000"/></svg></div>
  <svg style="left:351.8px;top:2.3px" width="14" height="15" viewBox="0 0 24 24" preserveAspectRatio="none"><use href="#i-account" width="24" height="24" fill="#eee"/></svg>
  <span class="tx" style="left:369px">root</span>
  <svg style="left:413.8px;top:4px" width="14.2" height="14.2"><use href="#i-check" fill="#52c41a"/></svg>
  <span class="tx" style="left:432px">Connected</span>
  <svg style="left:520.5px;top:4px" width="13" height="13"><use href="#i-ticket" fill="#eee"/></svg>
  <span class="tx" style="left:537.3px">MongoDB 4.4.29</span>
  <svg style="left:663.4px;top:3.5px" width="14" height="14"><use href="#i-history" fill="#eee"/></svg>
  <span class="tx" style="left:684.5px">a minute ago</span>
</div>
<div id="overlay"></div>
<div id="modal">
  <div id="mhdr">
    <div id="mtitle">Save changes</div>
    <svg id="mclose" style="left:588px;top:24.5px" width="9" height="9" viewBox="0 0 9 9"><path d="M0.5,0.5L8.5,8.5M8.5,0.5L0.5,8.5" stroke="#222" stroke-width="1.4"/></svg>
  </div>
  <div id="editor">
    <div id="gutter">
      <div class="gl" style="top:0">1</div><svg class="fold" style="top:5px" viewBox="0 0 6 4"><path d="M0.3,0.2H5.7L3,3.8Z" fill="#555"/></svg>
      <div class="gl" style="top:14px">2</div>
      <div class="gl" style="top:28px">3</div><svg class="fold" style="top:33px" viewBox="0 0 6 4"><path d="M0.3,0.2H5.7L3,3.8Z" fill="#555"/></svg>
      <div class="gl" style="top:42px">4</div>
      <div class="gl" style="top:56px">5</div>
      <div class="gl" style="top:70px">6</div>
      <div class="gl" style="top:84px">7</div>
      <div class="gl" style="top:98px">8</div>
      <div class="gl" style="top:112px">9</div>
      <div class="gl" style="top:126px">10</div>
      <div class="gl" style="top:140px">11</div>
      <div class="gl" style="top:154px">12</div>
      <div class="gl" style="top:168px">13</div>
      <div class="gl" style="top:182px">14</div>
      <div class="gl" style="top:196px">15</div>
      <div class="gl" style="top:210px">16</div>
    </div>
    <div id="code"><div class="cl">db.getCollection<b>(</b><span class="cs">'Customer'</span><b>)</b>.replaceOne<b>({</b></div><div class="cl">  <span class="cs">"_id"</span>: ObjectId<b>(</b><span class="cs">"68b1518f5ee8a711dea82543"</span><b>)</b></div><div class="cl"><b>}</b>, <b>{</b></div><div class="cl">  <span class="cs">"_id"</span>: ObjectId<b>(</b><span class="cs">"68b1518f5ee8a711dea82543"</span><b>)</b>,</div><div class="cl">  <span class="cs">"CustomerId"</span>: <span class="cn">2</span>,</div><div class="cl">  <span class="cs">"FirstName"</span>: <span class="cs">"Leonie"</span>,</div><div class="cl">  <span class="cs">"LastName"</span>: <span class="cs">"Köhler"</span>,</div><div class="cl">  <span class="cs">"Company"</span>: <b>null</b>,</div><div class="cl">  <span class="cs">"Address"</span>: <span class="cs">"Theodor-Heuss-Straße 34"</span>,</div><div class="cl">  <span class="cs">"City"</span>: <span class="cs">"Stuttgart"</span>,</div><div class="cl">  <span class="cs">"State"</span>: <b>null</b>,</div><div class="cl">  <span class="cs">"Country"</span>: <span class="cs">"Italy"</span>,</div><div class="cl">  <span class="cs">"PostalCode"</span>: <span class="cs">"70174"</span>,</div><div class="cl">  <span class="cs">"Phone"</span>: <span class="cs">"+49 0711 2842222"</span>,</div><div class="cl">  <span class="cs">"Fax"</span>: <b>null</b>,</div><div class="cl">  <span class="cs">"Email"</span>: <span class="cs">"leonekohler@surfeu.de"</span>,</div></div>
    <div id="escroll"><div id="ethumb"></div></div>
  </div>
  <div id="chk"></div>
  <div id="chktx">Don't ask again</div>
  <div id="mfoot">
    <div class="mbtn" style="left:18px">OK</div>
    <div class="mbtn" style="left:125px">Close</div>
    <div class="mbtn" style="left:233px">Open script</div>
  </div>
</div>
<svg style="position:absolute;left:10.8px;top:72.1px" width="28.3" height="27.4" viewBox="0 0 24 24" preserveAspectRatio="none"><use href="#i-db" width="24" height="24" fill="#b9b9b9"/></svg>
<div id="wm">filepuma</div>
</body></html>
